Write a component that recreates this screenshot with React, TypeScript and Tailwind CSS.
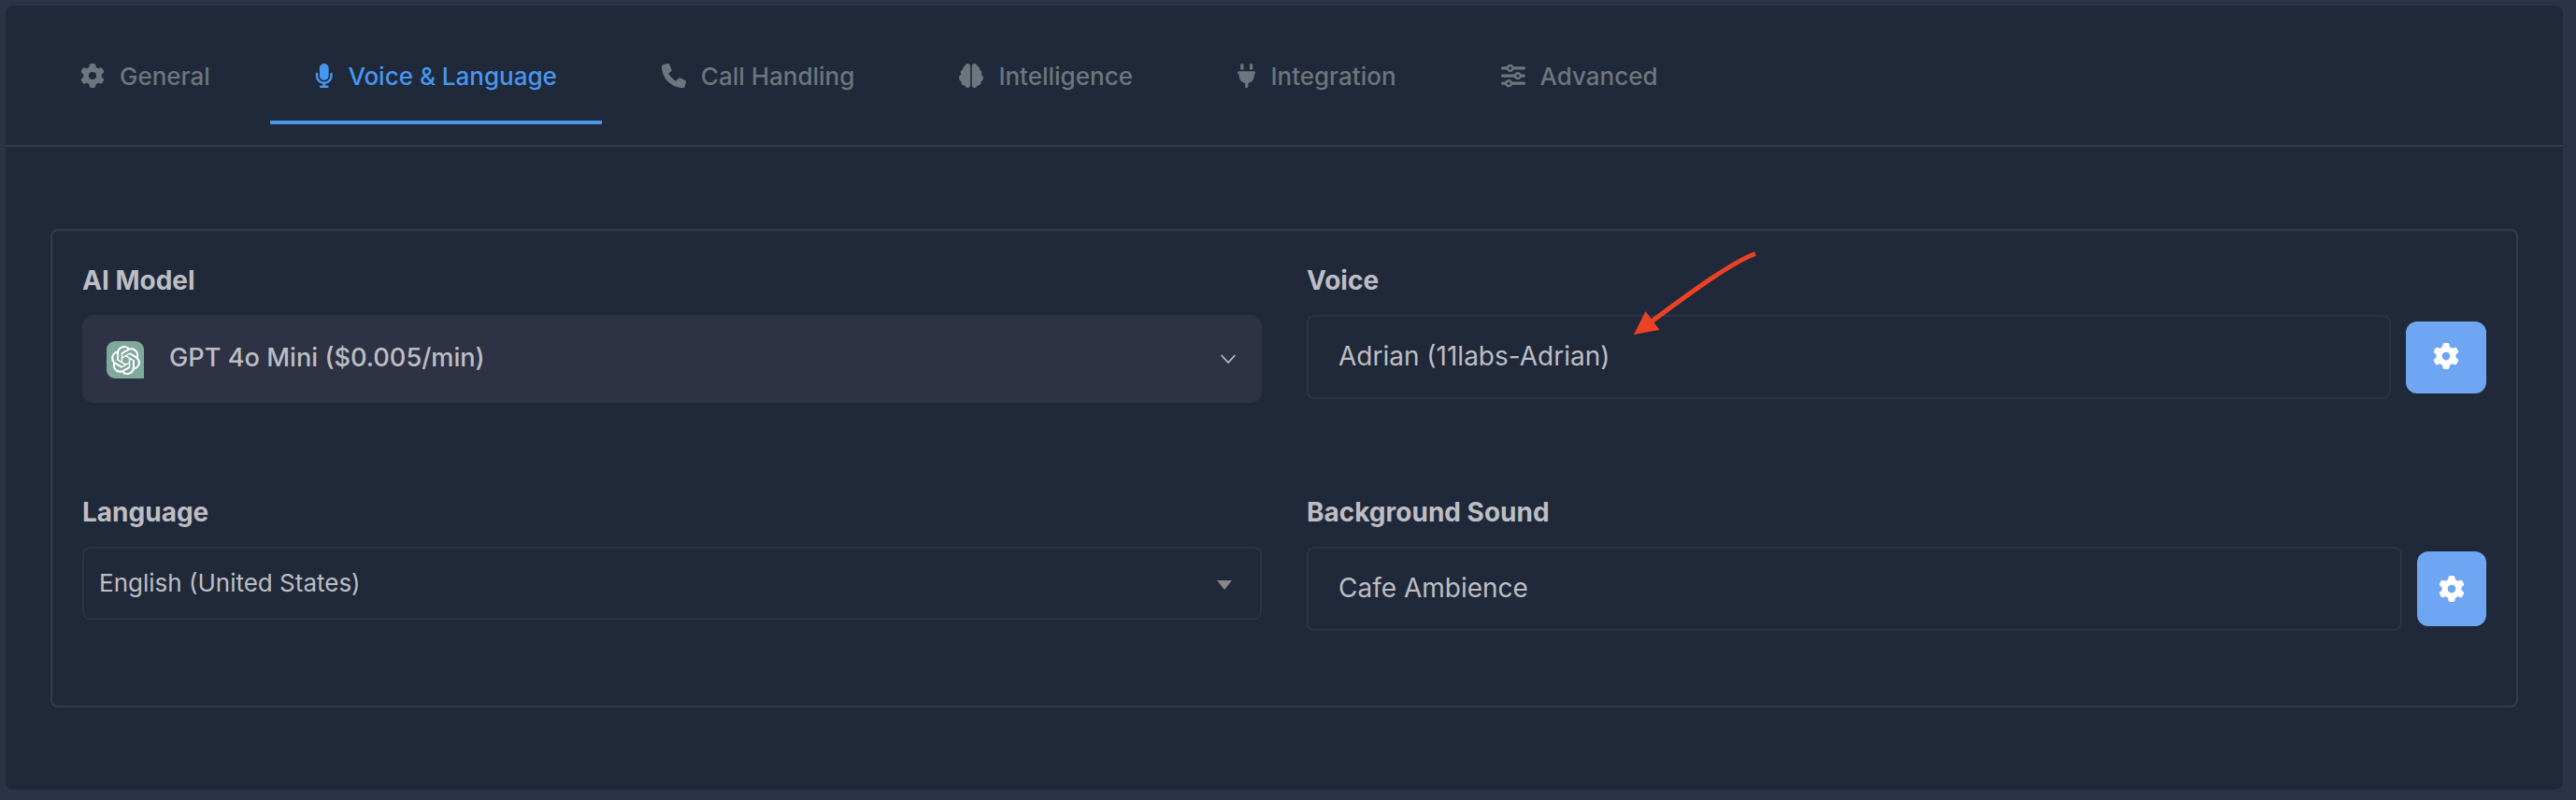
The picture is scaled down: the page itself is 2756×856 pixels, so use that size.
import type { ReactNode } from "react";
import type { IconType } from "react-icons";
import { FaBrain, FaGear, FaMicrophone, FaPhone, FaPlug, FaSliders } from "react-icons/fa6";
import { SiOpenai } from "react-icons/si";

type TabItem = { label: string; icon: IconType; size: string; active?: boolean };

const tabs: TabItem[] = [
  { label: "General", icon: FaGear, size: "h-[26px] w-[26px]" },
  { label: "Voice & Language", icon: FaMicrophone, size: "h-[26px] w-[19.5px]", active: true },
  { label: "Call Handling", icon: FaPhone, size: "h-[26px] w-[26px]" },
  { label: "Intelligence", icon: FaBrain, size: "h-[26px] w-[26px]" },
  { label: "Integration", icon: FaPlug, size: "h-[26px] w-[19.5px]" },
  { label: "Advanced", icon: FaSliders, size: "h-[26px] w-[26px]" },
];

function Tab({ label, icon: Icon, size, active }: TabItem) {
  return (
    <button
      className={
        "flex h-[103px] items-center gap-4 border-b-4 px-12 pt-[3px] text-[26px] font-medium whitespace-nowrap " +
        (active ? "border-[#4797ee] text-[#4797ee]" : "border-transparent text-[#6d757e]")
      }
    >
      <Icon preserveAspectRatio="xMidYMid slice" className={"mb-[1px] shrink-0 " + size} />
      <span>{label}</span>
    </button>
  );
}

function Field({ label, children }: { label: string; children: ReactNode }) {
  return (
    <div className="h-[248px]">
      <div className="mb-[18px] h-[36px] text-[28px] leading-[35px] font-bold">{label}</div>
      {children}
    </div>
  );
}

function TextBox({ children }: { children: ReactNode }) {
  return (
    <div className="flex h-[90px] flex-1 items-center rounded-lg border-2 border-[#2b3445] px-8 pb-0.5 text-[28px]">
      {children}
    </div>
  );
}

function Arrow() {
  return (
    <svg className="absolute top-[260px] left-[1740px]" width="150" height="110" viewBox="1740 260 150 110">
      <path d="M1878 271.500C1857 279 1822 303 1767 344" fill="none" stroke="#eb4226" strokeWidth="5" />
      <path d="M1748 358L1760.500 333L1775.500 353Z" fill="#eb4226" />
    </svg>
  );
}

export default function App() {
  return (
    <div className="relative h-[856px] w-[2756px] overflow-hidden bg-[#2a3446] pt-1.5 pl-1.5 font-['Inter',sans-serif] text-[#bdbec4]">
      <div className="h-[839px] w-[2736px] rounded-[8px] bg-[#202939]">
        <nav className="flex h-[151px] items-start gap-4 border-b-2 border-[#323c4e] px-8 pt-6">
          {tabs.map((t) => (
            <Tab key={t.label} {...t} />
          ))}
        </nav>
        <section className="mt-[88px] ml-12 grid h-[512px] w-[2640px] grid-cols-2 content-start gap-x-12 rounded-lg border-2 border-[#323c4e] px-8 pt-9">
          <Field label="AI Model">
            <div className="flex h-[94px] items-center rounded-xl bg-[#2d3345] px-[26px]">
              <span className="mt-0.5 flex size-10 items-center justify-center rounded-[9px] rounded-br-none bg-[#80a89c] text-white">
                <SiOpenai className="size-[31px]" />
              </span>
              <span className="ml-[27px] pb-[2px] text-[27.200px] font-medium">GPT 4o Mini ($0.005/min)</span>
              <svg className="mr-[2px] ml-auto" width="16" height="10" viewBox="0 0 16 10">
                <path d="M.7 1L8 9L15.300 1" fill="none" stroke="#bdbec4" strokeWidth="1.700" />
              </svg>
            </div>
          </Field>
          <Field label="Voice">
            <div className="flex gap-4">
              <TextBox>Adrian (11labs-Adrian)</TextBox>
              <button className="mt-[7px] flex h-[77px] w-[86px] items-center justify-center rounded-xl bg-[#6ea6f3] pb-[3px] text-white">
                <FaGear className="size-7" />
              </button>
            </div>
          </Field>
          <Field label="Language">
            <div className="flex h-[78px] items-center justify-between rounded-lg border-2 border-[#2b3445] pr-[30px] pl-4 text-[26px]">
              <span className="pb-0.5">English (United States)</span>
              <svg className="mt-1" width="16" height="10" viewBox="0 0 16 10">
                <path d="M0 0H16L8 10Z" fill="#888888" />
              </svg>
            </div>
          </Field>
          <Field label="Background Sound">
            <div className="flex gap-4">
              <TextBox>Cafe Ambience</TextBox>
              <button className="mt-[5px] flex h-[80px] w-[74px] items-center justify-center rounded-xl bg-[#6ea6f3] text-white">
                <FaGear className="size-7" />
              </button>
            </div>
          </Field>
        </section>
      </div>
      <Arrow />
    </div>
  );
}
